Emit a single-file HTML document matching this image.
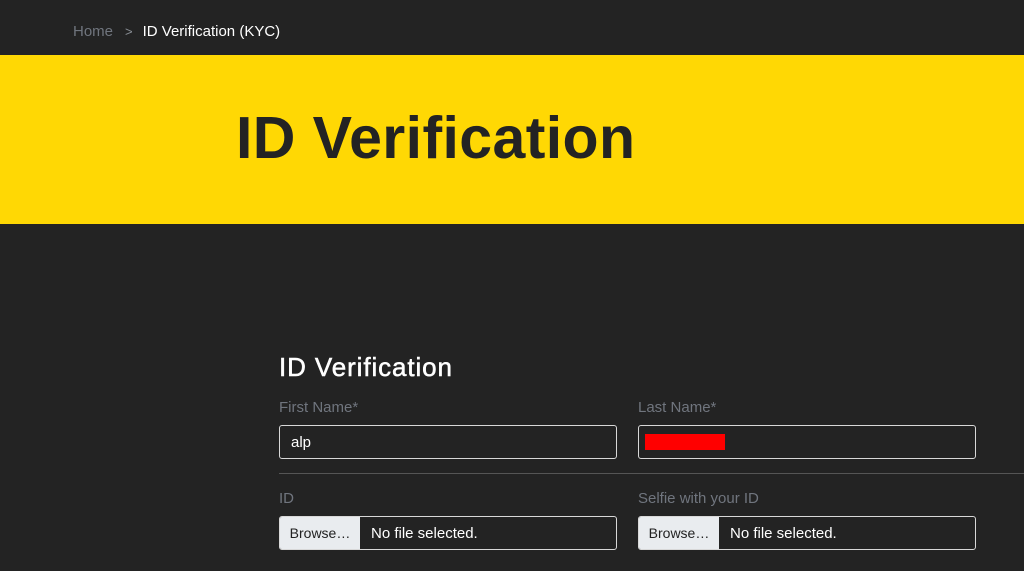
<!DOCTYPE html>
<html><head><meta charset="utf-8"><style>
body{margin:0;width:1024px;height:571px;overflow:hidden;background:#232323;font-family:"Liberation Sans",sans-serif;position:relative}
.a{position:absolute}
.bc{top:23px;left:73px;font-size:15px;color:#fff}
.bc .h{color:#70757e}
.bc .s{color:#8a8f96;margin:0 10px 0 12px;font-size:13px}
.band{top:55px;left:0;width:1024px;height:169px;background:#ffd804}
.t{left:236px;top:104px;font-size:59px;font-weight:bold;color:#232323;letter-spacing:0.4px}
.h2{left:279px;top:352px;font-size:26px;color:#fff;letter-spacing:0.9px;-webkit-text-stroke:0.5px #fff}
.l{font-size:15px;color:#70757e}
.in{height:32px;width:336px;border:1px solid #d8d8d8;border-radius:3px;box-sizing:content-box;color:#fff;font-size:15px}
.br{position:absolute;left:0;top:0;bottom:0;width:80px;background:#e9ecef;color:#222;line-height:32px;text-align:center;border-radius:2px 0 0 2px;font-size:14px}
</style></head><body>
<div class="a bc"><span class="h">Home</span><span class="s">&gt;</span>ID Verification (KYC)</div>
<div class="a band"></div>
<div class="a t">ID Verification</div>
<div class="a h2">ID Verification</div>
<div class="a l" style="left:279px;top:399px">First Name*</div>
<div class="a l" style="left:638px;top:399px">Last Name*</div>
<div class="a in" style="left:279px;top:425px"><span style="position:absolute;left:11px;top:8px">alp</span></div>
<div class="a in" style="left:638px;top:425px"><div style="position:absolute;left:6px;top:8px;width:80px;height:16px;background:#f00"></div></div>
<div class="a" style="left:279px;top:473px;width:745px;height:1px;background:#555"></div>
<div class="a l" style="left:279px;top:490px">ID</div>
<div class="a l" style="left:638px;top:490px">Selfie with your ID</div>
<div class="a in" style="left:279px;top:516px"><div class="br">Browse…</div><span style="position:absolute;left:91px;top:8px">No file selected.</span></div>
<div class="a in" style="left:638px;top:516px"><div class="br">Browse…</div><span style="position:absolute;left:91px;top:8px">No file selected.</span></div>
</body></html>
